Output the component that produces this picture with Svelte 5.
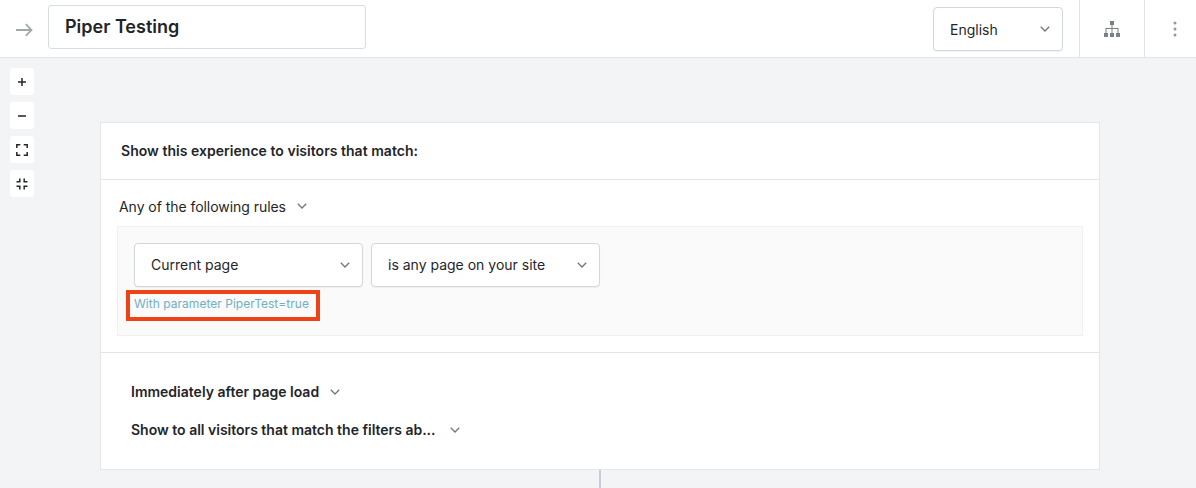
<script>
  const zoomButtons = ['plus', 'minus', 'expand', 'collapse'];
</script>

{#snippet chevron()}
  <svg class="chev" width="10" height="6" viewBox="0 0 10 6" fill="none"><path d="M.8.8 5 5 9.2.8" stroke="#6f767c" stroke-width="1.3"/></svg>
{/snippet}

<div class="page">
  <header class="top">
    <div class="back">
      <svg width="17" height="14" viewBox="0 0 17 14" fill="none"><path d="M0 7h15.200M9.800 1.200 15.500 7l-5.700 5.800" stroke="#a2a8aa" stroke-width="1.800"/></svg>
    </div>
    <div class="title">Piper Testing</div>
    <div class="spacer"></div>
    <div class="select lang"><span>English</span>{@render chevron()}</div>
    <div class="tool t1">
      <svg width="16" height="16" viewBox="0 0 16 16" fill="#7b8085"><rect x="6" y="0" width="4" height="4"/><rect x="0" y="12" width="4" height="4"/><rect x="6" y="12" width="4" height="4"/><rect x="12" y="12" width="4" height="4"/><path d="M7.500 4h1v3H14.500v5h-1V8h-5v4h-1V8h-5v4h-1V7h6z"/></svg>
    </div>
    <div class="tool t2">
      <svg width="4" height="16" viewBox="0 0 4 16" fill="#94989c"><circle cx="2" cy="2" r="1.500"/><circle cx="2" cy="8" r="1.500"/><circle cx="2" cy="14" r="1.500"/></svg>
    </div>
  </header>

  <main class="canvas">
    <div class="zoom">
      {#each zoomButtons as b}
        <div class="zbtn">
          <svg width="12" height="12" viewBox="0 0 12 12" fill="none" stroke="#23282c" stroke-width="1.500">
            {#if b === 'plus'}
              <path d="M2 6h8M6 2v8"/>
            {:else if b === 'minus'}
              <path d="M2 6h8" stroke="#55595d" stroke-width="2"/>
            {:else if b === 'expand'}
              <path d="M.800 4V.800h3.500M7.700.800h3.500V4M11.200 8v3.200H7.700M4.300 11.200H.800V8"/>
            {:else}
              <path d="M.500 3.800H3.800V.500M8.200.500v3.300h3.300M11.500 8.200H8.200v3.300M3.800 11.500V8.200H.500"/>
            {/if}
          </svg>
        </div>
      {/each}
    </div>

    <section class="card">
      <div class="card-head">Show this experience to visitors that match:</div>
      <div class="rules">
        <div class="rule-label"><span>Any of the following rules</span>{@render chevron()}</div>
        <div class="rule-box">
          <div class="rule-row">
            <div class="select rs"><span>Current page</span>{@render chevron()}</div>
            <div class="select rs"><span>is any page on your site</span>{@render chevron()}</div>
          </div>
          <div class="param">With parameter PiperTest=true</div>
        </div>
      </div>
      <div class="options">
        <div class="opt"><span>Immediately after page load</span>{@render chevron()}</div>
        <div class="opt o2"><span>Show to all visitors that match the filters ab...</span>{@render chevron()}</div>
      </div>
    </section>
    <div class="connector"></div>
  </main>
</div>

<style>
  :global(body) { margin: 0; }
  .page {
    width: 1196px; height: 488px; overflow: hidden;
    font-family: Inter, "Liberation Sans", sans-serif;
    color: #1f2529; background: #f3f4f6;
    display: flex; flex-direction: column;
  }
  .top {
    height: 58px; box-sizing: border-box; flex: none; background: #fff;
    border-bottom: 1px solid #e2e4e7;
    display: flex; align-items: flex-start;
  }
  .back { width: 48px; height: 57px; flex: none; display: flex; align-items: center; padding: 2px 0 0 16px; box-sizing: border-box; }
  .title {
    width: 318px; height: 44px; margin-top: 5px; box-sizing: border-box;
    border: 1px solid #d9dde2; border-radius: 3px;
    font-size: 18px; font-weight: 600; line-height: 41px; padding-left: 16px;
  }
  .spacer { flex: 1; }
  .select {
    box-sizing: border-box; background: #fff; border: 1px solid #d3d7dc; border-radius: 4px;
    box-shadow: 0 1px 1px rgba(30, 40, 60, .05);
    display: flex; align-items: center; justify-content: space-between;
    font-size: 14px; padding: 0 12px 0 16px; height: 44px;
  }
  .lang { width: 130px; margin-top: 7px; margin-right: 16px; }
  .tool { width: 65px; height: 57px; flex: none; box-sizing: border-box; border-left: 1px solid #e2e4e7; padding-top: 1px; display: flex; align-items: center; justify-content: center; }
  .t2 { width: 52px; padding-left: 9px; }
  .canvas { flex: 1; position: relative; padding: 64px 96px 0 100px; }
  .zoom { position: absolute; left: 10px; top: 10px; display: flex; flex-direction: column; gap: 7px; }
  .zbtn { width: 24px; height: 27px; background: #fff; border-radius: 3px; display: flex; align-items: center; justify-content: center; }
  .card { width: 1000px; height: 348px; box-sizing: border-box; background: #fff; border: 1px solid #e4e6e9; }
  .card-head { height: 57px; box-sizing: border-box; border-bottom: 1px solid #e2e4e7; font-size: 14px; font-weight: 600; line-height: 56px; padding-left: 20px; letter-spacing: .03px; }
  .rules { height: 173px; box-sizing: border-box; border-bottom: 1px solid #e2e4e7; padding: 0 16px; }
  .rule-label { height: 46px; display: flex; align-items: center; gap: 11px; font-size: 14px; padding: 6px 0 0 2px; box-sizing: border-box; letter-spacing: -.05px; }
  .rule-box { height: 110px; box-sizing: border-box; background: #fafafa; border: 1px solid #eef0f1; padding: 16px 16px 0; }
  .rule-row { display: flex; gap: 8px; }
  .rs { width: 229px; padding-bottom: 1px; }
  .param { font-size: 12px; color: #6fb0c6; line-height: 16px; margin-top: 9px; position: relative; width: fit-content; letter-spacing: .03px; }
  .param::after { content: ""; position: absolute; left: -8px; top: -6px; width: 194px; height: 31px; box-sizing: border-box; border: 4px solid #ee4316; }
  .options { padding: 30px 30px 0; }
  .opt { display: flex; align-items: center; gap: 11px; font-size: 14px; font-weight: 600; line-height: 18px; }
  .o2 { margin-top: 20px; gap: 14px; }
  .connector { position: absolute; left: 599px; top: 412px; width: 2px; height: 20px; background: #c8ccd8; }
  .chev { flex: none; }
</style>
